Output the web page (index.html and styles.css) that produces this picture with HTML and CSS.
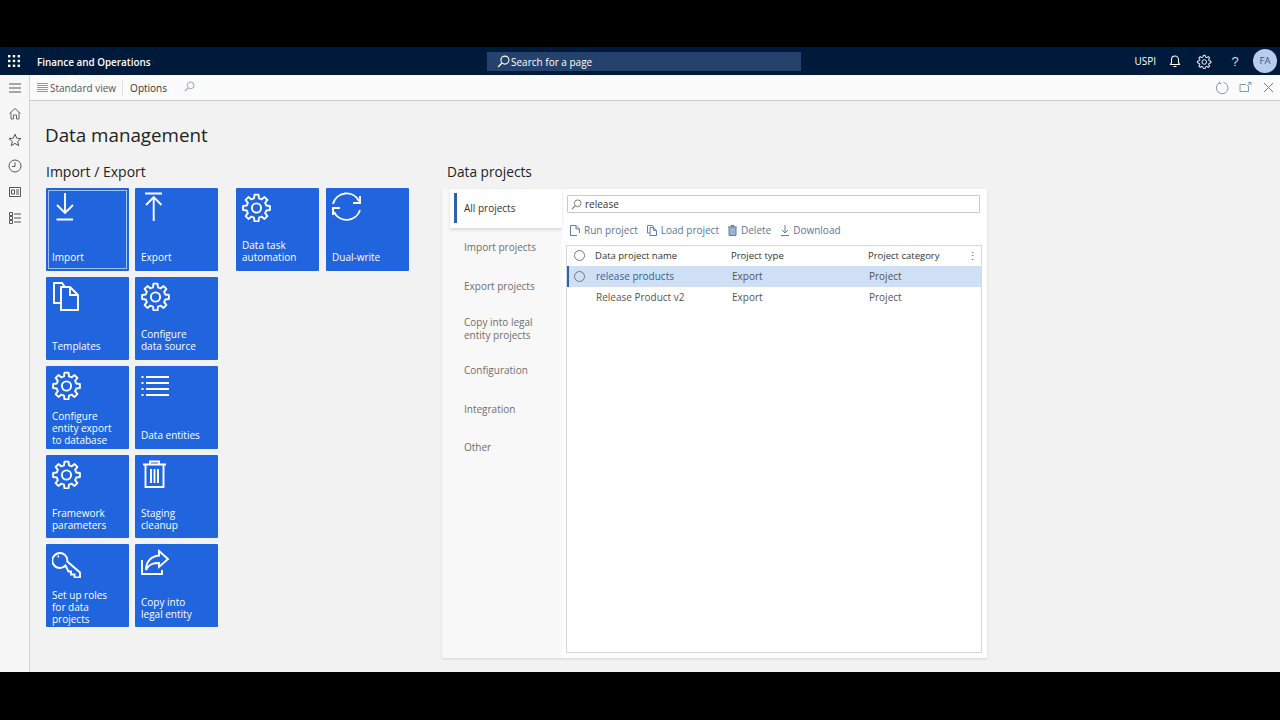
FILE: index.html
```html
<!DOCTYPE html>
<html lang="en">

<head>
    <meta charset="UTF-8">
    <meta name="viewport" content="width=device-width, initial-scale=1.0">
    <title>Data management</title>
    <link rel="stylesheet" href="styles.css">
</head>

<body>
    <svg class="defs" width="0" height="0">
        <symbol id="gear" viewBox="-14.500 -16 30 30">
            <g fill="none" stroke="currentColor" stroke-width="1.900" stroke-linejoin="round">
                <circle r="4.600"></circle>
                <path id="tooth" d="M-3.900-9.200-2.500-9.700-2-13.400H2L2.500-9.700 3.900-9.200"></path>
                <use href="#tooth" transform="rotate(45)"></use>
                <use href="#tooth" transform="rotate(90)"></use>
                <use href="#tooth" transform="rotate(135)"></use>
                <use href="#tooth" transform="rotate(180)"></use>
                <use href="#tooth" transform="rotate(225)"></use>
                <use href="#tooth" transform="rotate(270)"></use>
                <use href="#tooth" transform="rotate(315)"></use>
            </g>
        </symbol>
        <symbol id="lens" viewBox="0 0 12 12">
            <circle cx="7.300" cy="4.700" r="3.700" fill="none" stroke="currentColor" stroke-width="1"></circle>
            <path d="M4.600 7.400 1 11" fill="none" stroke="currentColor" stroke-width="1.200"></path>
        </symbol>
    </svg>

    <div class="letterbox-top"></div>

    <header class="appbar">
        <svg class="waffle" width="14" height="14" viewBox="0 0 14 14" fill="#fff">
            <rect x="1" y="1" width="2.400" height="2.400"></rect>
            <rect x="5.800" y="1" width="2.400" height="2.400"></rect>
            <rect x="10.600" y="1" width="2.400" height="2.400"></rect>
            <rect x="1" y="5.800" width="2.400" height="2.400"></rect>
            <rect x="5.800" y="5.800" width="2.400" height="2.400"></rect>
            <rect x="10.600" y="5.800" width="2.400" height="2.400"></rect>
            <rect x="1" y="10.600" width="2.400" height="2.400"></rect>
            <rect x="5.800" y="10.600" width="2.400" height="2.400"></rect>
            <rect x="10.600" y="10.600" width="2.400" height="2.400"></rect>
        </svg>
        <div class="app-name">Finance and Operations</div>
        <div class="page-search">
            <svg width="13" height="13"><use href="#lens"></use></svg>
            <span>Search for a page</span>
        </div>
        <div class="app-tools">
            <span class="company">USPI</span>
            <svg class="bell" width="14" height="14" viewBox="0 0 14 14" fill="none" stroke="#fff" stroke-width="1.100">
                <path d="M2.500 10.500H11.500L10.500 8.500V5.500A3.500 3.500 0 0 0 3.500 5.500V8.500Z"></path>
                <path d="M5.500 12.500H8.500"></path>
            </svg>
            <svg class="cog" width="15" height="15"><use href="#gear"></use></svg>
            <span class="help">?</span>
            <span class="avatar">FA</span>
        </div>
    </header>

    <div class="workspace">
        <nav class="sidenav">
            <svg width="14" height="14" viewBox="0 0 14 14" fill="none" stroke="#555" stroke-width="1">
                <path d="M1 3H13M1 7H13M1 11H13"></path>
            </svg>
            <svg width="14" height="14" viewBox="0 0 14 14" fill="none" stroke="#666" stroke-width="1">
                <path d="M1.500 6.500 7 1.500 12.500 6.500M3 5.500V12H5.500V8H8.500V12H11V5.500"></path>
            </svg>
            <svg width="14" height="14" viewBox="0 0 14 14" fill="none" stroke="#555" stroke-width="1">
                <path d="M7 1.200 8.700 5.200 13 5.600 9.700 8.400 10.700 12.700 7 10.400 3.300 12.700 4.300 8.400 1 5.600 5.300 5.200Z"></path>
            </svg>
            <svg width="14" height="14" viewBox="0 0 14 14" fill="none" stroke="#555" stroke-width="1">
                <circle cx="7" cy="7" r="6"></circle>
                <path d="M7 3.500V7.500H4"></path>
            </svg>
            <svg width="14" height="14" viewBox="0 0 14 14" fill="none" stroke="#555" stroke-width="1">
                <path d="M1.500 2.500H12.500V11.500H1.500ZM3.500 5H6.500V9H3.500ZM8 5H11M8 7H11M8 9H11"></path>
            </svg>
            <svg width="14" height="14" viewBox="0 0 14 14" fill="none" stroke="#555" stroke-width="1">
                <path d="M1.500 1.500H4.500V4.500H1.500ZM1.500 5.500H4.500V8.500H1.500ZM1.500 9.500H4.500V12.500H1.500ZM6 3H13M6 7H13M6 11H13"></path>
            </svg>
        </nav>

        <div class="content">
            <div class="toolbar">
                <div class="view-switch">
                    <svg width="11" height="9" viewBox="0 0 11 9" stroke="#7f9cc4" stroke-width="1">
                        <path d="M0 .5H11M0 2.500H11M0 4.500H11M0 6.500H11M0 8.500H11"></path>
                    </svg>
                    <span>Standard view</span>
                </div>
                <div class="toolbar-sep"></div>
                <div class="toolbar-item">Options</div>
                <svg class="toolbar-lens" width="11" height="11"><use href="#lens"></use></svg>
                <div class="toolbar-right">
                    <svg width="14" height="14" viewBox="0 0 14 14" fill="none" stroke="#7d97b8" stroke-width="1">
                        <path d="M4.500 1.800A5.800 5.800 0 1 0 8.500 1.300M4.500 .5V2.500H6.500"></path>
                    </svg>
                    <svg width="13" height="11" viewBox="0 0 13 11" fill="none" stroke="#7d97b8" stroke-width="1">
                        <path d="M9.500 4V9.500H1V2.500H7M8 4 11.500 .8M9 .5H12V3"></path>
                    </svg>
                    <svg width="11" height="11" viewBox="0 0 11 11" fill="none" stroke="#5f7fa6" stroke-width="1">
                        <path d="M1 1 10 10M10 1 1 10"></path>
                    </svg>
                </div>
            </div>

            <main class="page">
                <h1>Data management</h1>
                <div class="sections">
                    <section class="import-export">
                        <h2>Import / Export</h2>
                        <div class="tile-groups">
                            <div class="tiles">
                                <a class="tile tile-focus">
                                    <svg class="tile-icon" viewBox="0 0 30 30" fill="none" stroke="#fff" stroke-width="1.900">
                                        <path d="M13 1V21M5 13 13 21 21 13M4.500 27.500H21"></path>
                                    </svg>
                                    <span>Import</span>
                                </a>
                                <a class="tile">
                                    <svg class="tile-icon" viewBox="0 0 30 30" fill="none" stroke="#fff" stroke-width="1.900">
                                        <path d="M4 1.500H21M12.700 29V5M5 13 12.700 5 20.500 13"></path>
                                    </svg>
                                    <span>Export</span>
                                </a>
                                <a class="tile">
                                    <svg class="tile-icon" viewBox="0 0 30 30" fill="none" stroke="#fff" stroke-width="1.900">
                                        <path d="M9 22H2V2H10L13 6M9 6H18L26 14V29H9ZM18 6V14H26"></path>
                                    </svg>
                                    <span>Templates</span>
                                </a>
                                <a class="tile">
                                    <svg class="tile-icon"><use href="#gear"></use></svg>
                                    <span>Configure<br>data source</span>
                                </a>
                                <a class="tile tile-long">
                                    <svg class="tile-icon"><use href="#gear"></use></svg>
                                    <span>Configure<br>entity export<br>to database</span>
                                </a>
                                <a class="tile">
                                    <svg class="tile-icon" viewBox="0 0 30 30" fill="none" stroke="#fff" stroke-width="1.900">
                                        <path d="M5 7H28M5 13H28M5 19H28M5 25H28M.5 7H2.500M.5 13H2.500M.5 19H2.500M.5 25H2.500"></path>
                                    </svg>
                                    <span>Data entities</span>
                                </a>
                                <a class="tile tile-low">
                                    <svg class="tile-icon"><use href="#gear"></use></svg>
                                    <span>Framework<br>parameters</span>
                                </a>
                                <a class="tile tile-low">
                                    <svg class="tile-icon" viewBox="0 0 30 30" fill="none" stroke="#fff" stroke-width="1.900">
                                        <path d="M2 5.500H25M9 5.500V2.500H18V5.500M4.500 5.500V28H22.500V5.500M10 10V24M13.500 10V24M17 10V24"></path>
                                    </svg>
                                    <span>Staging<br>cleanup</span>
                                </a>
                                <a class="tile tile-long tile-low">
                                    <svg class="tile-icon" viewBox="0 0 30 30" fill="none" stroke="#fff" stroke-width="1.900">
                                        <path d="M13.500 17.500A7.500 7.500 0 1 1 15.300 13.500L28 24.500V29.500H22.500V26.500H19V23.500H16.500ZM5.500 8.500H7"></path>
                                    </svg>
                                    <span>Set up roles<br>for data<br>projects</span>
                                </a>
                                <a class="tile tile-low">
                                    <svg class="tile-icon" viewBox="0 0 30 30" fill="none" stroke="#fff" stroke-width="1.900">
                                        <path d="M18 3 27 11 18 19V15C12 15 8 16 5 22 5 14 10 8 18 7.500ZM1 12V26H21V22"></path>
                                    </svg>
                                    <span>Copy into<br>legal entity</span>
                                </a>
                            </div>
                            <div class="tiles tiles-wide">
                                <a class="tile">
                                    <svg class="tile-icon"><use href="#gear"></use></svg>
                                    <span>Data task<br>automation</span>
                                </a>
                                <a class="tile">
                                    <svg class="tile-icon" viewBox="0 0 30 30" fill="none" stroke="#fff" stroke-width="1.900">
                                        <path d="M1 12A14 14 0 0 1 27 9M28 4V11H21M28 18A14 14 0 0 1 2 20M1 23V16H8"></path>
                                    </svg>
                                    <span>Dual-write</span>
                                </a>
                            </div>
                        </div>
                    </section>

                    <section class="data-projects">
                        <h2>Data projects</h2>
                        <div class="panel">
                            <ul class="tabs">
                                <li class="active">All projects</li>
                                <li>Import projects</li>
                                <li>Export projects</li>
                                <li class="two-line">Copy into legal<br>entity projects</li>
                                <li>Configuration</li>
                                <li class="tab-short">Integration</li>
                                <li>Other</li>
                            </ul>
                            <div class="tab-body">
                                <div class="filter">
                                    <svg width="11" height="11"><use href="#lens"></use></svg>
                                    <span>release</span>
                                </div>
                                <div class="actions">
                                    <span class="action">
                                        <svg width="10" height="11" viewBox="0 0 10 11" fill="none" stroke="#5c80ad">
                                            <path d="M7 10.500H.5V.5H6L9.500 4V8M6 .5V4H9.500"></path>
                                        </svg>
                                        Run project
                                    </span>
                                    <span class="action">
                                        <svg width="10" height="11" viewBox="0 0 10 11" fill="none" stroke="#5c80ad">
                                            <path d="M3 8H.5V.5H5.500L6.500 2M3 2.500H6.500L9.500 5.500V10.500H3ZM6.500 2.500V5.500H9.500"></path>
                                        </svg>
                                        Load project
                                    </span>
                                    <span class="action">
                                        <svg width="9" height="11" viewBox="0 0 9 11" fill="#9db3cf" stroke="#5c80ad">
                                            <path d="M0 2H9M3 2V.5H6V2M1 2V10.500H8V2"></path>
                                        </svg>
                                        Delete
                                    </span>
                                    <span class="action action-last">
                                        <svg width="8" height="11" viewBox="0 0 8 11" fill="none" stroke="#5c80ad">
                                            <path d="M4 0V8M1 5 4 8 7 5M0 10.500H8"></path>
                                        </svg>
                                        Download
                                    </span>
                                </div>
                                <div class="grid">
                                    <div class="row row-head">
                                        <span class="radio"></span>
                                        <span>Data project name</span>
                                        <span>Project type</span>
                                        <span>Project category</span>
                                        <span class="more">⋮</span>
                                    </div>
                                    <div class="row row-selected">
                                        <span class="radio"></span>
                                        <span class="name-link">release products</span>
                                        <span>Export</span>
                                        <span>Project</span>
                                    </div>
                                    <div class="row">
                                        <span></span>
                                        <span>Release Product v2</span>
                                        <span>Export</span>
                                        <span>Project</span>
                                    </div>
                                </div>
                            </div>
                        </div>
                    </section>
                </div>
            </main>
        </div>
    </div>

    <div class="letterbox-bottom"></div>
</body>

</html>
```

FILE: styles.css
```css
* {
    margin: 0;
    padding: 0;
    box-sizing: border-box;
}

li {
    list-style: none;
}

body {
    width: 1280px;
    height: 720px;
    overflow: hidden;
    display: flex;
    flex-direction: column;
    background-color: #000;
    font-family: "Open Sans", "Liberation Sans", sans-serif;
    font-size: 10px;
    color: #333;
}

svg {
    display: block;
    flex: none;
}

.defs {
    position: absolute;
}

.letterbox-top {
    height: 47px;
}

.letterbox-bottom {
    height: 48px;
}

/* top bar */
.appbar {
    height: 28px;
    display: flex;
    align-items: center;
    background-color: #001a3b;
    color: #fff;
}

.waffle {
    margin-left: 7px;
}

.app-name {
    width: 450px;
    margin-left: 16px;
    padding-top: 1px;
    font-size: 9.900px;
    font-weight: 600;
}

.page-search {
    width: 314px;
    height: 19px;
    display: flex;
    align-items: center;
    gap: 1px;
    padding-left: 10px;
    background-color: #24426c;
    font-size: 10px;
}

.page-search span {
    padding-top: 1px;
}

.app-tools {
    margin-left: auto;
    display: flex;
    align-items: center;
}

.company {
    font-size: 10px;
}

.bell {
    margin-left: 12px;
}

.cog {
    margin-left: 15px;
    color: #fff;
}

.help {
    width: 12px;
    margin-left: 17px;
    font-size: 13px;
    font-family: "Liberation Sans", sans-serif;
    text-align: center;
    color: #ddd;
}

.avatar {
    width: 24px;
    height: 24px;
    margin: 0 3px 0 12px;
    border-radius: 50%;
    background-color: #b7cdf0;
    color: #34577f;
    font-size: 9.500px;
    line-height: 24px;
    text-align: center;
}

/* frame */
.workspace {
    flex: 1;
    display: flex;
    background-color: #f2f2f2;
}

.sidenav {
    width: 30px;
    display: flex;
    flex-direction: column;
    align-items: center;
    gap: 12px;
    padding-top: 6px;
    background-color: #f7f7f7;
    border-right: 1px solid #d4d4d4;
}

.content {
    flex: 1;
    display: flex;
    flex-direction: column;
}

.toolbar {
    height: 26px;
    display: flex;
    align-items: center;
    padding-left: 7px;
    padding-right: 6px;
    background-color: #fbfbfb;
    border-bottom: 1px solid #c9c9c9;
}

.view-switch {
    display: flex;
    gap: 2px;
    color: #555;
    font-size: 10px;
}

.view-switch svg {
    margin-top: 2px;
}

.toolbar-sep {
    width: 1px;
    height: 14px;
    margin: 0 7px 0 6px;
    background-color: #ddd;
}

.toolbar-item {
    font-size: 10px;
    color: #333;
}

.toolbar-lens {
    margin-left: 17px;
    margin-bottom: 3px;
    color: #8aa0bd;
}

.toolbar-right {
    margin-left: auto;
    display: flex;
    align-items: center;
    gap: 10px;
}

.toolbar-right svg:last-child {
    margin-left: 1px;
}

/* page */
.page {
    flex: 1;
    padding: 20px 0 0 15px;
}

h1 {
    height: 28px;
    font-size: 18.800px;
    font-weight: 400;
    line-height: 28px;
    color: #222;
}

h2 {
    height: 20px;
    font-size: 14px;
    font-weight: 400;
    line-height: 20px;
    color: #222;
}

.sections {
    display: flex;
    margin-top: 13px;
}

.import-export {
    width: 402px;
    padding-left: 1px;
}

.import-export h2 {
    margin-bottom: 6px;
}

.tile-groups {
    display: flex;
    gap: 18px;
}

.tiles {
    display: grid;
    grid-template-columns: 83px 83px;
    grid-auto-rows: 83px;
    gap: 6px;
    align-self: flex-start;
}

.tiles-wide {
    column-gap: 7px;
}

.tile {
    display: flex;
    flex-direction: column;
    justify-content: space-between;
    padding: 4px 6px 8px;
    background-color: #2065dd;
    border-radius: 1px;
    color: #fff;
    font-size: 10px;
    line-height: 12px;
}

.tile-long {
    padding-bottom: 3px;
}

/* bottom rows sit a pixel lower in the shot */
.tile-low {
    padding-bottom: 7px;
}

.tile-long.tile-low {
    padding-bottom: 2px;
}

.tile-focus {
    outline: 1px solid #9fc0f2;
    outline-offset: -3px;
}

.tile-icon {
    width: 30px;
    height: 30px;
    color: #fff;
}

/* data projects */
.data-projects {
    width: 545px;
}

.data-projects h2 {
    font-size: 13.700px;
}

.panel {
    display: flex;
    width: 545px;
    height: 469px;
    margin: 7px 0 0 -5px;
    background-color: #fff;
    box-shadow: 0 1px 2px rgba(0, 0, 0, 0.12);
}

.tabs {
    width: 120px;
    padding-left: 8px;
    background-color: #f8f8f8;
    color: #6e6e6e;
    font-size: 10px;
    line-height: 13px;
}

.tabs li {
    height: 39px;
    padding: 13px 0 0 14px;
    position: relative;
}

.tabs li.two-line {
    height: 45px;
    padding-top: 10px;
}

.tabs li.tab-short {
    height: 38px;
}

.tabs li.active {
    background-color: #fff;
    color: #333;
    box-shadow: 0 2px 3px rgba(0, 0, 0, 0.12);
}

.tabs li.active::before {
    content: "";
    position: absolute;
    left: 4px;
    top: 4px;
    width: 3px;
    height: 30px;
    background-color: #2f62ad;
}

.tab-body {
    flex: 1;
    padding: 6px 4px 5px;
    display: flex;
    flex-direction: column;
}

.filter {
    width: 413px;
    height: 18px;
    margin-left: 1px;
    display: flex;
    align-items: center;
    gap: 3px;
    padding-left: 3px;
    background-color: #fff;
    border: 1px solid #c9c9c9;
    border-radius: 1px;
    color: #333;
    font-size: 10px;
}

.filter svg {
    color: #777;
}

.actions {
    height: 32px;
    padding: 2px 0 0 4px;
    display: flex;
    align-items: center;
    gap: 9px;
    color: #5a7599;
    font-size: 10px;
}

.action {
    display: flex;
    align-items: center;
    gap: 4px;
}

.action-last {
    margin-left: 1px;
}

.grid {
    flex: 1;
    width: 416px;
    background-color: #fff;
    border: 1px solid #d8d8d8;
}

.row {
    display: grid;
    grid-template-columns: 29px 136px 137px 1fr 14px;
    align-items: center;
    height: 21px;
    padding-bottom: 1px;
    color: #555;
    font-size: 10px;
}

.row-head {
    grid-template-columns: 28px 136px 137px 1fr 14px;
    height: 20px;
    color: #333;
    font-size: 9.500px;
}

.row-selected {
    background-color: #cfe0f6;
    box-shadow: inset 2px 0 0 #2f62ad;
}

.name-link {
    color: #35609a;
}

.radio {
    width: 11px;
    height: 11px;
    margin-left: 7px;
    border: 1px solid #777;
    border-radius: 50%;
}

.more {
    font-size: 11px;
    color: #555;
}
```
